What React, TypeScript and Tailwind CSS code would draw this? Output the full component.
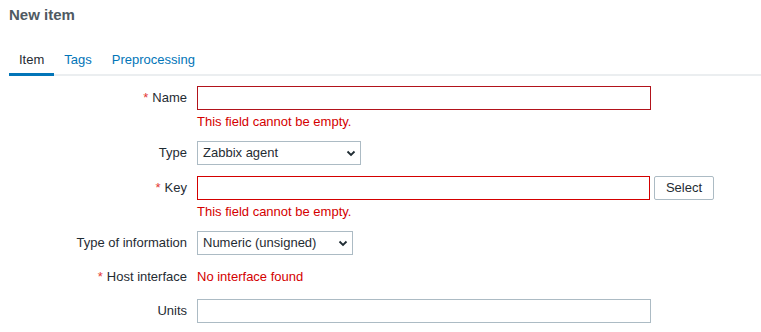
import React from 'react';

const font = { fontFamily: '"Liberation Sans", Arial, sans-serif' };

const Chevron = () => (
    <svg width="10" height="7" viewBox="0 0 10 7" className="shrink-0">
        <path d="M1.5 1.5 L5 5 L8.5 1.5" fill="none" stroke="#1f2c33" strokeWidth="1.8" />
    </svg>
);

const Label: React.FC<{ text: string; required?: boolean }> = ({ text, required }) => (
    <div className="w-[197px] shrink-0 pr-[10px] text-right text-[13px] leading-[24px] text-[#1f2c33]">
        {required && <span className="text-[#e33734] mr-[4px]">*</span>}
        {text}
    </div>
);

const ErrorLine: React.FC<{ text: string }> = ({ text }) => (
    <div className="mt-[4px] text-[13px] leading-[16px] text-[#d40000]">{text}</div>
);

const Select: React.FC<{ value: string; width: string }> = ({ value, width }) => (
    <div className={`${width} h-[24px] border border-[#acbbc4] bg-white flex items-center justify-between pl-[5px] pr-[4px] text-[13px] text-[#1f2c33]`}>
        <span>{value}</span>
        <Chevron />
    </div>
);

export default function App() {
    return (
        <div className="w-[761px] h-[332px] bg-white overflow-hidden" style={font}>
            <h1 className="pl-[9px] pt-[6px] text-[15px] leading-[18px] font-bold text-[#4f5a62]">New item</h1>

            <div className="ml-[9px] mt-[28px] flex border-b-2 border-[#ebeef0] text-[13px] leading-[16px]">
                <div className="px-[10px] pb-[5px] border-b-[3px] border-[#0275b8] -mb-[2px] text-[#1f2c33]">Item</div>
                <div className="px-[10px] pb-[5px] text-[#0275b8]">Tags</div>
                <div className="px-[10px] pb-[5px] text-[#0275b8]">Preprocessing</div>
            </div>

            <div className="mt-[10px]">
                <div className="flex">
                    <Label text="Name" required />
                    <div>
                        <div className="w-[454px] h-[24px] border border-[#b2131b] bg-white" />
                        <ErrorLine text="This field cannot be empty." />
                    </div>
                </div>

                <div className="flex mt-[11px]">
                    <Label text="Type" />
                    <Select value="Zabbix agent" width="w-[164px]" />
                </div>

                <div className="flex mt-[11px]">
                    <Label text="Key" required />
                    <div>
                        <div className="flex gap-[4px]">
                            <div className="w-[453px] h-[24px] border border-[#d40000] bg-white" />
                            <button className="w-[60px] h-[24px] border border-[#acbbc4] bg-white text-[13px] text-[#1f2c33] rounded-[2px]">
                                Select
                            </button>
                        </div>
                        <ErrorLine text="This field cannot be empty." />
                    </div>
                </div>

                <div className="flex mt-[11px]">
                    <Label text="Type of information" />
                    <Select value="Numeric (unsigned)" width="w-[156px]" />
                </div>

                <div className="flex mt-[10px]">
                    <Label text="Host interface" required />
                    <div className="text-[13px] leading-[24px] text-[#d40000]">No interface found</div>
                </div>

                <div className="flex mt-[10px]">
                    <Label text="Units" />
                    <div className="w-[454px] h-[24px] border border-[#acbbc4] bg-white" />
                </div>
            </div>
        </div>
    );
}
